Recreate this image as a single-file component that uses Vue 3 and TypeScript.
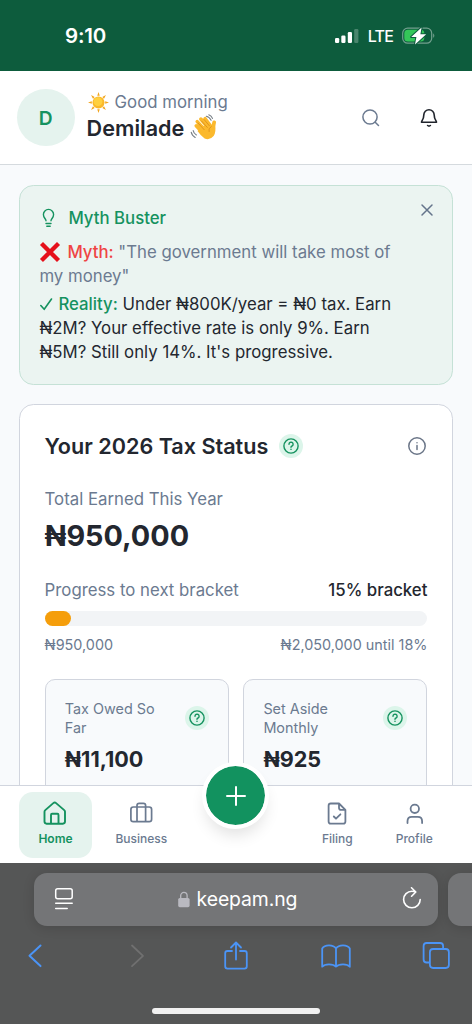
<script setup lang="ts">
interface Stat {
  label: string
  value: string
}

const stats: Stat[] = [
  { label: 'Tax Owed So Far', value: '₦11,100' },
  { label: 'Set Aside Monthly', value: '₦925' },
]

const progress = 6.8
</script>

<template>
  <div class="phone">
    <div class="status">
      <span class="time">9:10</span>
      <div class="status-right">
        <svg width="24" height="16" viewBox="0 0 24 16">
          <rect x="0" y="10" width="4.2" height="5" rx="1.2" fill="#fff" />
          <rect x="6.3" y="7.5" width="4.2" height="7.5" rx="1.2" fill="#fff" />
          <rect x="12.8" y="4" width="4.2" height="11" rx="1.2" fill="#fff" />
          <rect x="19.2" y="1" width="4.2" height="14" rx="1.2" fill="#fff" opacity=".25" />
        </svg>
        <span class="lte">LTE</span>
        <svg width="34" height="18" viewBox="0 0 34 18">
          <rect x=".7" y="1.2" width="29" height="15" rx="5" fill="none" stroke="#fff" stroke-opacity=".42" stroke-width="1.2" />
          <rect x="2.3" y="2.8" width="20" height="11.8" rx="3.6" fill="#34c759" />
          <path d="M31.3 6.3q2 2.4 0 4.8z" fill="#fff" opacity=".5" />
          <path d="M19.600 .4L9.200 10.100h5.200l-1.400 7.300L24.200 7.300h-5.800z" fill="#fff" stroke="#0d5c3d" stroke-width="2" paint-order="stroke" stroke-linejoin="round" />
        </svg>
      </div>
    </div>

    <header class="header">
      <div class="avatar">D</div>
      <div class="hello">
        <div class="greet">
          <svg width="21" height="21" viewBox="0 0 22 22">
            <path d="M11 0l1.3 4h-2.6zM11 22l1.3-4h-2.6zM0 11l4-1.3v2.6zM22 11l-4-1.3v2.6zM3.2 3.2l3.8 2-1.8 1.8zM18.8 3.2l-2 3.8-1.8-1.8zM3.2 18.8l2-3.8 1.8 1.8zM18.8 18.8l-3.8-2 1.8-1.8z" fill="#f2a51e" />
            <circle cx="11" cy="11" r="6.3" fill="#fbb829" />
            <circle cx="10.5" cy="10" r="4.6" fill="#ffd03e" />
          </svg>
          <span>Good morning</span>
        </div>
        <div class="name">
          <span>Demilade</span>
          <svg width="28" height="28" viewBox="0 0 28 28">
            <g fill="none" stroke="#fbb92d" stroke-linecap="round">
              <path d="M6.2 11.8l7 7.5M7.2 7.600l8.500 9.400M10.800 5l8 9.400M15 4.600l6 8" stroke-width="3.500" />
              <path d="M22.500 15.500l1.700-7.200" stroke-width="3.700" />
            </g>
            <path d="M9 15.500L18.500 8l3 3.500 3.500-1.500q1.400 8-1.400 12-4.200 5-9 2.500Q11 22 7.500 17z" fill="#fbb92d" />
            <path d="M8 9l6.200 6.700M11.500 7l5.800 6.400M14.200 5.600l5.200 6.200M19 17.500q-1.300-3 2.300-5" fill="none" stroke="#d98c19" stroke-width=".8" stroke-linecap="round" />
            <path d="M16.300 2.200q3.200.6 4.800 4M18.800.8q2.600.8 3.700 3.600M1.200 18.200q.7 3.500 4 5.200M3.200 16.600q.5 2.800 3.200 4.400" fill="none" stroke="#777f86" stroke-width="1.100" stroke-linecap="round" />
          </svg>
        </div>
      </div>
      <svg class="search" width="20" height="20" viewBox="0 0 20 20" fill="none" stroke="#6b7a90" stroke-width="1.500" stroke-linecap="round">
        <circle cx="9" cy="9" r="7.100" /><path d="M14.200 14.200l3.300 3.300" />
      </svg>
      <svg class="bell" width="20" height="22" viewBox="0 0 20 22" fill="none" stroke="#20242c" stroke-width="1.600" stroke-linecap="round" stroke-linejoin="round">
        <path d="M4.800 7.900a5.200 5.200 0 0 1 10.400 0c0 4.600 2.300 5.600 2.300 7.300H2.500c0-1.700 2.300-2.700 2.300-7.300z" /><path d="M8.600 18.500q1.400 1.200 2.800 0" />
      </svg>
    </header>

    <main class="main">
      <section class="myth">
        <svg class="close" width="14" height="14" viewBox="0 0 14 14" stroke="#64748b" stroke-width="1.500" stroke-linecap="round">
          <path d="M2 2l10 10M12 2L2 12" />
        </svg>
        <div class="myth-title">
          <svg width="20" height="20" viewBox="0 0 20 20" fill="none" stroke="#15925f" stroke-width="1.400" stroke-linecap="round" stroke-linejoin="round">
            <path d="M7 12.800c0-2-2.600-3-2.600-6.300a5.100 5.100 0 0 1 10.200 0c0 3.300-2.600 4.300-2.600 6.300M7 15.500h5M7.800 18.300h3.400" />
          </svg>
          <span>Myth Buster</span>
        </div>
        <p class="claim">
          <svg class="cross" width="22" height="22" viewBox="0 0 22 22" stroke="#e5101b" stroke-width="4.300" stroke-linecap="square"><path d="M4 4l14 14M18 4L4 18" /></svg>
          <b class="red">Myth:</b> "The government will take most of<br>my money"
        </p>
        <p class="reality">
          <svg class="tick" width="14" height="14" viewBox="0 0 14 14" fill="none" stroke="#15925f" stroke-width="1.600" stroke-linecap="round" stroke-linejoin="round"><path d="M1.800 8.500l3.400 3.800L12.500 2" /></svg>
          <b class="green">Reality:</b> Under ₦800K/year = ₦0 tax. Earn<br>₦2M? Your effective rate is only 9%. Earn<br>₦5M? Still only 14%. It's progressive.
        </p>
      </section>

      <section class="card">
        <div class="card-head">
          <h2>Your 2026 Tax Status</h2>
          <span class="help">
            <svg width="16" height="16" viewBox="0 0 16 16" fill="none" stroke="#15925f" stroke-width="1.400" stroke-linecap="round"><circle cx="8" cy="8" r="7.100" /><path d="M6 6.200a2.050 2.050 0 1 1 3.100 1.800C8.300 8.400 8 8.700 8 9.200M8 11.300v.1" /></svg>
          </span>
          <svg class="info" width="20" height="20" viewBox="0 0 20 20" fill="none" stroke="#6b7688" stroke-width="1.500" stroke-linecap="round"><circle cx="10" cy="10" r="8.200" /><path d="M10 9.600v3.900M10 6.700v.1" /></svg>
        </div>
        <div class="label">Total Earned This Year</div>
        <div class="total">₦950,000</div>
        <div class="row">
          <span class="label">Progress to next bracket</span>
          <span class="bracket">15% bracket</span>
        </div>
        <div class="track"><div class="fill" :style="{ width: progress + '%' }"></div></div>
        <div class="row small"><span>₦950,000</span><span>₦2,050,000 until 18%</span></div>
        <div class="stats">
          <div v-for="s in stats" :key="s.label" class="stat">
            <div class="stat-head">
              <span>{{ s.label }}</span>
              <i class="help">
                <svg width="16" height="16" viewBox="0 0 16 16" fill="none" stroke="#15925f" stroke-width="1.400" stroke-linecap="round"><circle cx="8" cy="8" r="7.100" /><path d="M6 6.200a2.050 2.050 0 1 1 3.100 1.800C8.300 8.400 8 8.700 8 9.200M8 11.300v.1" /></svg>
              </i>
            </div>
            <div class="stat-value">{{ s.value }}</div>
          </div>
        </div>
      </section>
    </main>

    <nav class="nav">
      <a class="item active">
        <svg width="28" height="28" viewBox="0 0 28 28" fill="none" stroke="#15925f" stroke-width="1.900" stroke-linejoin="round">
          <path d="M3.500 12.800q0-1 .8-1.700l8-7q1.400-1.200 2.800 0l8.100 7q.8.700.8 1.700V22.600q0 2.100-2.100 2.100H5.600q-2.100 0-2.100-2.100zM10 24.500v-8.600q0-1.100 1.100-1.100h5.300q1.100 0 1.100 1.100v8.600" />
        </svg>
        <span>Home</span>
      </a>
      <a class="item">
        <svg width="28" height="28" viewBox="0 0 28 28" fill="none" stroke="#6b7a90" stroke-width="1.700" stroke-linejoin="round">
          <rect x="3.900" y="8" width="20.700" height="14.700" rx="2.400" /><path d="M10 22.700V6.500q0-2.200 2.200-2.200h4.200q2.200 0 2.200 2.200v16.200" />
        </svg>
        <span>Business</span>
      </a>
      <div class="slot">
        <button class="fab">
          <svg width="22" height="22" viewBox="0 0 22 22" stroke="#fff" stroke-width="2" stroke-linecap="round"><path d="M11 2v18M2 11h18" /></svg>
        </button>
      </div>
      <a class="item">
        <svg width="28" height="28" viewBox="0 0 28 28" fill="none" stroke="#6b7a90" stroke-width="1.800" stroke-linejoin="round" stroke-linecap="round">
          <path d="M16 4.500H7.800q-2.200 0-2.200 2.200v15.800q0 2.200 2.200 2.200h12.400q2.200 0 2.200-2.200V10.900zv4.200q0 2.200 2.200 2.200h4.200M10.800 17.500l2.200 2.200 4.400-4.400" />
        </svg>
        <span>Filing</span>
      </a>
      <a class="item">
        <svg width="28" height="28" viewBox="0 0 28 28" fill="none" stroke="#6b7a90" stroke-width="1.800" stroke-linecap="round">
          <circle cx="14.800" cy="9.800" r="4.200" /><path d="M7.500 24v-1.800q0-4.300 4.300-4.300h6q4.300 0 4.300 4.300V24" />
        </svg>
        <span>Profile</span>
      </a>
    </nav>

    <footer class="safari">
      <div class="tabs">
        <div class="url">
          <svg class="reader" width="20" height="24" viewBox="0 0 20 24" fill="none" stroke="#fff" stroke-width="1.500" stroke-linecap="round"><rect x="1.700" y="1.700" width="16.500" height="10" rx="2" /><path d="M1.700 16.300h16.500M1.700 21.500h11.500" /></svg>
          <div class="domain">
            <svg width="12" height="17" viewBox="0 0 12 17"><rect x=".2" y="7" width="11.400" height="9.200" rx="1.600" fill="#b9b9c0" /><path d="M2.700 7.500V4.600a3.200 3.200 0 0 1 6.400 0v2.900" fill="none" stroke="#b9b9c0" stroke-width="1.300" /></svg>
            <span>keepam.ng</span>
          </div>
          <svg class="reload" width="22" height="24" viewBox="0 0 22 24" fill="none" stroke="#fff" stroke-width="1.600" stroke-linecap="round" stroke-linejoin="round"><path d="M19.200 12.500a8.300 8.300 0 1 1-8.300-8.300q2 0 3.500.7M10.500.8l4.300 4.200-4.200 4.200" /></svg>
        </div>
        <div class="next-tab"></div>
      </div>
      <div class="tools">
        <svg width="30" height="30" viewBox="0 0 30 30" fill="none" stroke="#4b94f6" stroke-width="2" stroke-linecap="round" stroke-linejoin="round"><path d="M19.500 4.500L8.500 14.800l11 10.300" /></svg>
        <svg width="30" height="30" viewBox="0 0 30 30" fill="none" stroke="#707070" stroke-width="1.800" stroke-linecap="round" stroke-linejoin="round"><path d="M11 4.500l11 10.300L11 25.100" /></svg>
        <svg width="30" height="32" viewBox="0 0 30 32" fill="none" stroke="#4b94f6" stroke-width="1.800" stroke-linecap="round" stroke-linejoin="round"><path d="M12 11H7.500q-2.300 0-2.300 2.300v13q0 2.300 2.300 2.300h17q2.300 0 2.300-2.300v-13q0-2.300-2.300-2.300H20M16 19.500V2.700M11 7.500l5-5 5 5" /></svg>
        <svg width="32" height="30" viewBox="0 0 32 30" fill="none" stroke="#4b94f6" stroke-width="1.800" stroke-linecap="round" stroke-linejoin="round"><path d="M16 7.500Q14 4.300 9 4.300T2.200 7.500v18.200q2-2.400 6.800-2.400t7 2.400q2.200-2.400 7-2.400t6.800 2.400V7.500Q28 4.300 23 4.300T16 7.500zV25.500" /></svg>
        <svg width="30" height="30" viewBox="0 0 30 30" fill="none" stroke="#4b94f6" stroke-width="1.800" stroke-linejoin="round"><path d="M8.500 21.500H5.600q-3 0-3-3V5q0-3 3-3h13.500q3 0 3 3v3" /><rect x="8.900" y="8" width="19" height="19" rx="3.200" /></svg>
      </div>
      <div class="indicator"></div>
    </footer>
  </div>
</template>

<style>
body { margin: 0; }
</style>

<style scoped>
.phone {
  width: 472px;
  height: 1024px;
  display: flex;
  flex-direction: column;
  overflow: hidden;
  background: #f8fafc;
  font-family: Inter, 'Noto Sans', sans-serif;
  font-size: 16.8px;
  line-height: 24px;
  color: #23272f;
}
svg { flex: none; display: block; }
.status {
  height: 71px;
  box-sizing: border-box;
  background: #0d5c3d;
  color: #fff;
  display: flex;
  justify-content: space-between;
  align-items: center;
  padding: 0 36px 0 65px;
}
.time { font-size: 20.5px; font-weight: 600; letter-spacing: -.2px; }
.status-right { display: flex; align-items: center; gap: 9px; }
.lte { font-size: 16px; font-weight: 500; letter-spacing: -.8px; }
.header {
  height: 94px;
  box-sizing: border-box;
  background: #fff;
  border-bottom: 1.2px solid #d5dade;
  display: flex;
  align-items: center;
  padding: 0 33px 0 17px;
}
.avatar {
  width: 57.6px;
  height: 57.6px;
  border-radius: 50%;
  background: #e5f3ee;
  color: #15925f;
  font-weight: 600;
  font-size: 19.2px;
  display: flex;
  align-items: center;
  justify-content: center;
}
.hello { margin-left: 12px; flex: 1; }
.greet { display: flex; align-items: center; gap: 6px; color: #6b7a90; padding-left: 1px; margin-top: -3px; }
.name { display: flex; align-items: center; gap: 6px; font-size: 21.6px; font-weight: 600; height: 28px; }
.search { margin-right: 38px; }
.main {
  flex: 1;
  min-height: 0;
  overflow: hidden;
  padding: 20px 19.2px 0;
  display: flex;
  flex-direction: column;
  gap: 19px;
}
.myth {
  position: relative;
  flex: none;
  box-sizing: border-box;
  height: 200px;
  border: 1.2px solid #c5e1d6;
  border-radius: 14.4px;
  background: #ebf4f1;
  padding: 20px 19.2px;
}
.close { position: absolute; top: 17px; right: 17.5px; }
.myth-title { display: flex; align-items: center; gap: 9px; color: #15925f; font-weight: 500; }
p { margin: 0; white-space: nowrap; }
b { font-weight: 500; }
.claim { margin-top: 9.6px; color: #6b7a90; }
.reality { margin-top: 4.8px; }
.cross { display: inline-block; vertical-align: -5px; margin-right: 6px; }
.tick { display: inline-block; vertical-align: -1px; margin-right: 5px; }
.red { color: #ef4444; }
.green { color: #15925f; }
.card {
  flex: none;
  box-sizing: border-box;
  height: 460px;
  background: #fff;
  border: 1.2px solid #d1d5de;
  border-radius: 14.4px;
  padding: 24px 24.4px;
}
.card-head { display: flex; align-items: center; height: 34px; margin-bottom: 24px; }
h2 { margin: 0 10.5px 0 0; font-size: 21.6px; font-weight: 600; line-height: 34px; }
.info { margin-left: auto; }
.help {
  width: 24px;
  height: 24px;
  flex: none;
  border-radius: 50%;
  background: #dcf5ea;
  display: flex;
  align-items: center;
  justify-content: center;
}
.label { color: #6b7a90; }
.total { font-size: 28.8px; font-weight: 700; line-height: 38.4px; margin: 6px 0 23px; }
.row { display: flex; justify-content: space-between; }
.bracket { font-weight: 500; }
.track { height: 14.4px; border-radius: 8px; background: #f2f4f6; margin: 9px 0 9.6px; }
.fill { height: 100%; border-radius: 8px; background: #f59e0b; }
.small { font-size: 14.4px; line-height: 19.2px; color: #6b7a90; }
.stats { display: grid; grid-template-columns: 1fr 1fr; gap: 14.4px; margin-top: 24px; }
.stat {
  border: 1.2px solid #d1d5de;
  border-radius: 10px;
  background: #f8fafc;
  padding: 19.6px 19.2px;
  height: 100px;
}
.stat-head { display: flex; justify-content: space-between; align-items: center; font-size: 14.4px; line-height: 19.2px; color: #6b7a90; }
.stat-head span { width: 98px; }
.stat-value { font-size: 21.6px; font-weight: 700; line-height: 34px; margin-top: 4px; }
.nav {
  position: relative;
  height: 78px;
  flex: none;
  box-sizing: border-box;
  border-top: 1.2px solid #d1d5de;
  background: #fff;
  display: grid;
  grid-template-columns: 72.6px 99px 90px 113px 41px;
  padding: 6px 0 0 19.2px;
}
.item {
  height: 65.5px;
  border-radius: 14px;
  display: flex;
  flex-direction: column;
  align-items: center;
  padding-top: 6.5px;
  box-sizing: border-box;
  font-size: 12px;
  font-weight: 500;
  line-height: 18px;
  gap: 3.5px;
  color: #6b7a90;
}
.active { background: #e5f3ee; color: #15925f; font-weight: 600; }
.slot { display: flex; justify-content: center; }
.fab {
  width: 67px;
  height: 67px;
  box-sizing: border-box;
  margin-top: -30px;
  padding: 0;
  border: 4.8px solid #fff;
  border-radius: 50%;
  background: #12925f;
  background-clip: padding-box;
  box-shadow: 0 10px 16px -4px rgba(0, 0, 0, .12);
  display: flex;
  align-items: center;
  justify-content: center;
}
.safari {
  height: 161px;
  flex: none;
  box-sizing: border-box;
  background: #555656;
  padding-top: 9.5px;
  display: flex;
  flex-direction: column;
}
.tabs { display: flex; gap: 10px; padding-left: 34px; height: 53.5px; }
.url, .next-tab { background: #747577; border-radius: 13px; box-shadow: 0 2px 12px rgba(0, 0, 0, .14); }
.url { width: 404px; flex: none; box-sizing: border-box; padding: 0 15px 0 20px; display: flex; align-items: center; justify-content: space-between; }
.next-tab { width: 60px; flex: none; }
.domain { display: flex; align-items: center; gap: 7px; color: #fff; font-size: 19.4px; letter-spacing: -.1px; }
.tools { display: flex; justify-content: space-between; align-items: center; padding: 0 21px; height: 60px; }
.indicator { width: 168px; height: 6px; border-radius: 3px; background: #f1f1f1; margin: 22px auto 0; }
</style>
